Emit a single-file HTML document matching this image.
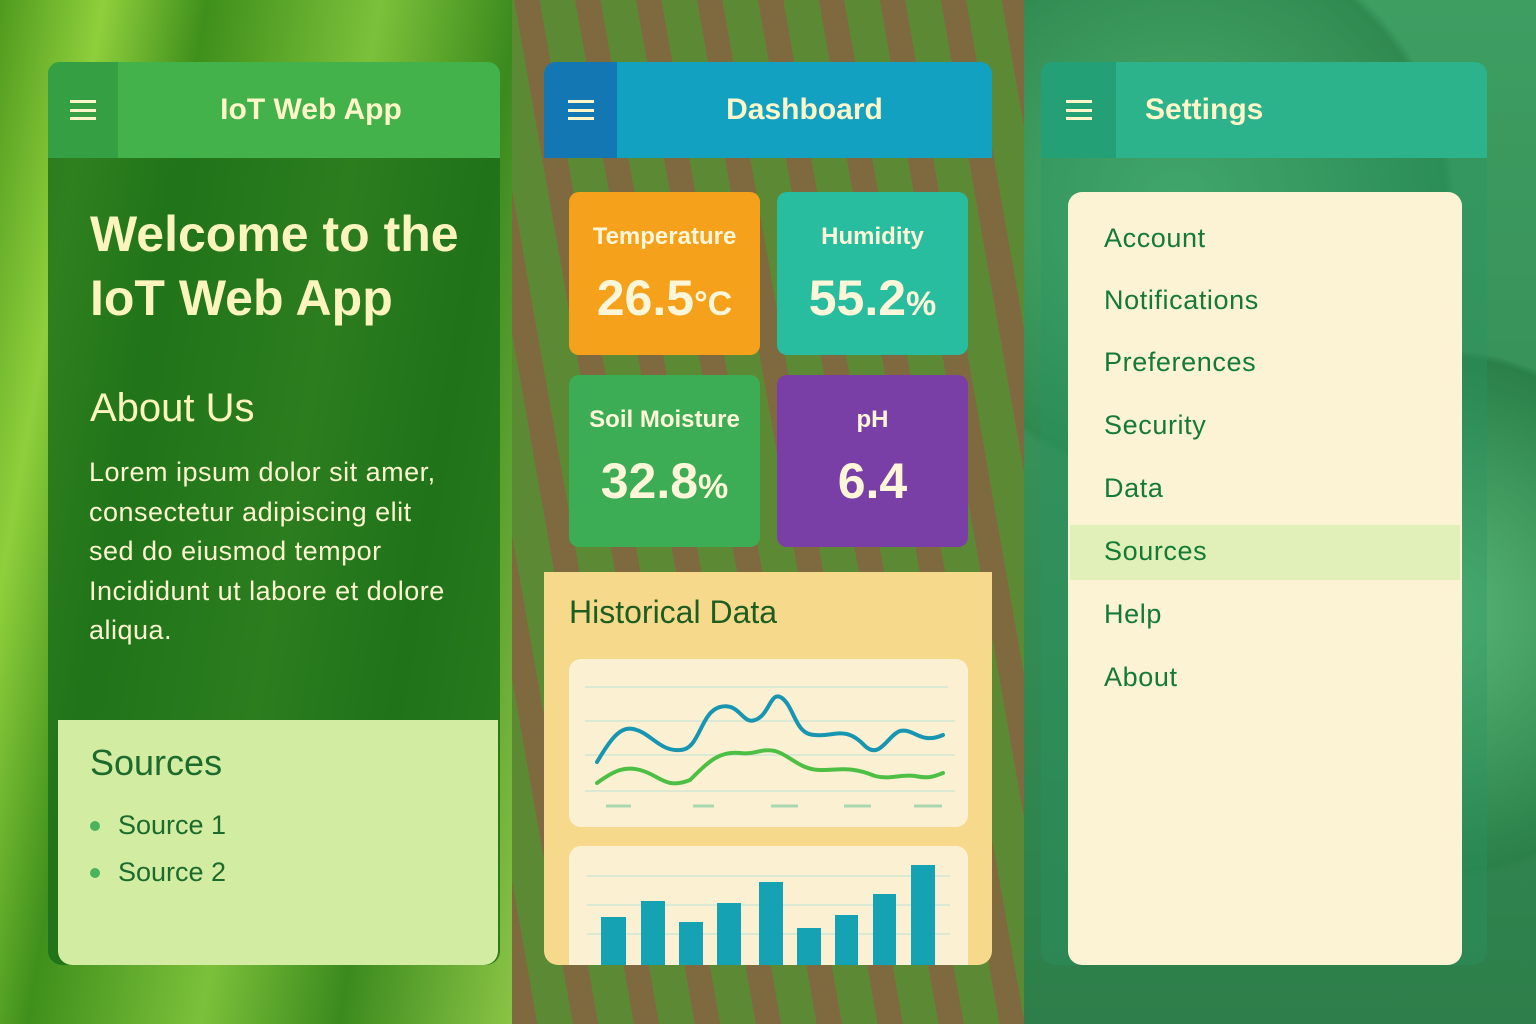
<!DOCTYPE html>
<html><head><meta charset="utf-8"><style>
*{margin:0;padding:0;box-sizing:border-box}
body{width:1536px;height:1024px;overflow:hidden;position:relative;font-family:"Liberation Sans",sans-serif}
.a{position:absolute}
.bg1{left:0;top:0;width:512px;height:1024px;background:linear-gradient(100deg,#4f9a1e 0%,#8fcf3c 15%,#3f8f1c 30%,#7cc13a 55%,#3b8a1e 75%,#8ac445 100%)}
.bg2{left:512px;top:0;width:512px;height:1024px;background:repeating-linear-gradient(80deg,#7e6a3e 0 25px,#5c8a34 25px 60px);}
.bg3{left:1024px;top:0;width:512px;height:1024px;background:radial-gradient(circle at 30% 20%,#4fb070 0,#2f8a50 30%,transparent 31%),radial-gradient(circle at 80% 60%,#5ab878 0,#2a8048 35%,transparent 36%),linear-gradient(#3e9e62,#2d7e4a)}
.hd{height:96px;color:#fdf6c8;font-weight:bold;font-size:30px;display:flex;align-items:center}
.ham{width:26px;height:20px;border-top:3px solid #fdf6c8;border-bottom:3px solid #fdf6c8;position:relative}
.ham:after{content:"";position:absolute;left:0;right:0;top:5.5px;border-top:3px solid #fdf6c8}
.card{border-radius:10px;color:#fdf6d8;text-align:center;font-weight:bold}
.card .t{font-size:24px;margin-top:31px}
.card .v{font-size:50px;margin-top:18px}
.card .v small{font-size:34px}
.mi{position:absolute;left:1104px;font-size:27px;letter-spacing:.6px;color:#157a34}
</style></head><body>
<div class="a bg1"></div><div class="a bg2"></div><div class="a bg3"></div>

<!-- left -->
<div class="a" style="left:48px;top:62px;width:452px;height:903px;background:rgba(26,110,24,.82);border-radius:12px 12px 14px 14px"></div>
<div class="a hd" style="left:48px;top:62px;width:452px;background:#43b24b;border-radius:12px 12px 0 0">
 <div style="width:70px;height:96px;background:#34a043;border-radius:12px 0 0 0;display:flex;align-items:center;justify-content:center"><div class="ham"></div></div>
 <div style="flex:1;text-align:center;padding-left:4px">IoT Web App</div></div>
<div class="a" style="left:90px;top:202px;color:#fbf5bd;font-weight:bold;font-size:50px;line-height:64px">Welcome to the<br>IoT Web App</div>
<div class="a" style="left:90px;top:386px;color:#fbf5bd;font-size:40px">About Us</div>
<div class="a" style="left:89px;top:453px;color:#fbf5d0;font-size:27px;letter-spacing:.5px;line-height:39.5px">Lorem ipsum dolor sit amer,<br>consectetur adipiscing elit<br>sed do eiusmod tempor<br>Incididunt ut labore et dolore<br>aliqua.</div>
<div class="a" style="left:58px;top:720px;width:440px;height:245px;background:#d2eca2;border-radius:0 0 14px 14px"></div>
<div class="a" style="left:90px;top:742px;color:#1d6b2c;font-size:36px">Sources</div>
<div class="a" style="left:90px;top:821px;width:10px;height:10px;border-radius:50%;background:#4bb35c"></div>
<div class="a" style="left:118px;top:810px;color:#1d6b2c;font-size:27px">Source 1</div>
<div class="a" style="left:90px;top:868px;width:10px;height:10px;border-radius:50%;background:#4bb35c"></div>
<div class="a" style="left:118px;top:857px;color:#1d6b2c;font-size:27px">Source 2</div>

<!-- middle -->
<div class="a hd" style="left:544px;top:62px;width:448px;background:#13a1c1;border-radius:12px 12px 0 0">
 <div style="width:73px;height:96px;background:#1277b2;border-radius:12px 0 0 0;display:flex;align-items:center;justify-content:center"><div class="ham"></div></div>
 <div style="flex:1;text-align:center;padding-right:0">Dashboard</div></div>
<div class="a card" style="left:569px;top:192px;width:191px;height:163px;background:#f6a11c"><div class="t">Temperature</div><div class="v">26.5<small>°C</small></div></div>
<div class="a card" style="left:777px;top:192px;width:191px;height:163px;background:#27bd9e"><div class="t">Humidity</div><div class="v">55.2<small>%</small></div></div>
<div class="a card" style="left:569px;top:375px;width:191px;height:172px;background:#3cad55"><div class="t">Soil Moisture</div><div class="v">32.8<small>%</small></div></div>
<div class="a card" style="left:777px;top:375px;width:191px;height:172px;background:#7a3fa6"><div class="t">pH</div><div class="v">6.4</div></div>
<div class="a" style="left:544px;top:572px;width:448px;height:393px;background:#f6d98b;border-radius:0 0 14px 14px"></div>
<div class="a" style="left:569px;top:594px;color:#1d5e20;font-size:32px">Historical Data</div>
<div class="a" style="left:569px;top:659px;width:399px;height:168px;background:#fbf1d2;border-radius:12px"></div>
<div class="a" style="left:569px;top:846px;width:399px;height:119px;background:#fbf1d2;border-radius:12px 12px 0 0"></div>
<svg class="a" style="left:0;top:0" width="1536" height="1024">
 <g stroke="#cfe6d4" stroke-width="1.5"><line x1="585" y1="687" x2="948" y2="687"/><line x1="585" y1="721" x2="955" y2="721"/><line x1="585" y1="755" x2="955" y2="755"/><line x1="585" y1="791" x2="955" y2="791"/>
 <line x1="587" y1="876" x2="950" y2="876"/><line x1="587" y1="905" x2="950" y2="905"/><line x1="587" y1="934" x2="950" y2="934"/></g>
 <g stroke="#a8d8b0" stroke-width="3"><line x1="606" y1="806" x2="631" y2="806"/><line x1="693" y1="806" x2="714" y2="806"/><line x1="771" y1="806" x2="798" y2="806"/><line x1="844" y1="806" x2="871" y2="806"/><line x1="914" y1="806" x2="942" y2="806"/></g>
 <path d="M597,762 C610,740 620,726 633,729 C650,732 660,752 680,750 C700,750 700,712 720,707 C740,702 742,725 755,720 C770,715 770,690 782,698 C795,708 795,735 815,735 C835,737 845,725 865,746 C880,760 888,735 900,731 C915,728 920,745 943,735" fill="none" stroke="#1895b0" stroke-width="4" stroke-linecap="round"/>
 <path d="M597,783 C615,770 625,766 640,770 C660,775 665,790 690,780 C710,760 720,751 740,753 C755,755 760,748 775,751 C790,755 800,770 820,770 C840,770 850,766 875,776 C890,780 900,774 915,776 C930,779 935,776 943,773" fill="none" stroke="#4ebf45" stroke-width="4" stroke-linecap="round"/>
 <g fill="#15a3b3"><rect x="601" y="917" width="25" height="48"/><rect x="641" y="901" width="24" height="64"/><rect x="679" y="922" width="24" height="43"/><rect x="717" y="903" width="24" height="62"/><rect x="759" y="882" width="24" height="83"/><rect x="797" y="928" width="24" height="37"/><rect x="835" y="915" width="23" height="50"/><rect x="873" y="894" width="23" height="71"/><rect x="911" y="865" width="24" height="100"/></g>
</svg>

<!-- right -->
<div class="a" style="left:1041px;top:62px;width:446px;height:903px;background:rgba(40,150,100,.35);border-radius:12px 12px 14px 14px"></div>
<div class="a hd" style="left:1041px;top:62px;width:446px;background:#2cb38c;border-radius:12px 12px 0 0">
 <div style="width:75px;height:96px;background:#24a077;border-radius:12px 0 0 0;display:flex;align-items:center;justify-content:center"><div class="ham"></div></div>
 <div style="padding-left:29px">Settings</div></div>
<div class="a" style="left:1068px;top:192px;width:394px;height:773px;background:#fcf2d4;border-radius:14px"></div>
<div class="a" style="left:1070px;top:525px;width:390px;height:55px;background:#e1efb8"></div>
<div class="mi" style="top:223px">Account</div>
<div class="mi" style="top:285px">Notifications</div>
<div class="mi" style="top:347px">Preferences</div>
<div class="mi" style="top:410px">Security</div>
<div class="mi" style="top:473px">Data</div>
<div class="mi" style="top:536px">Sources</div>
<div class="mi" style="top:599px">Help</div>
<div class="mi" style="top:662px">About</div>
</body></html>
